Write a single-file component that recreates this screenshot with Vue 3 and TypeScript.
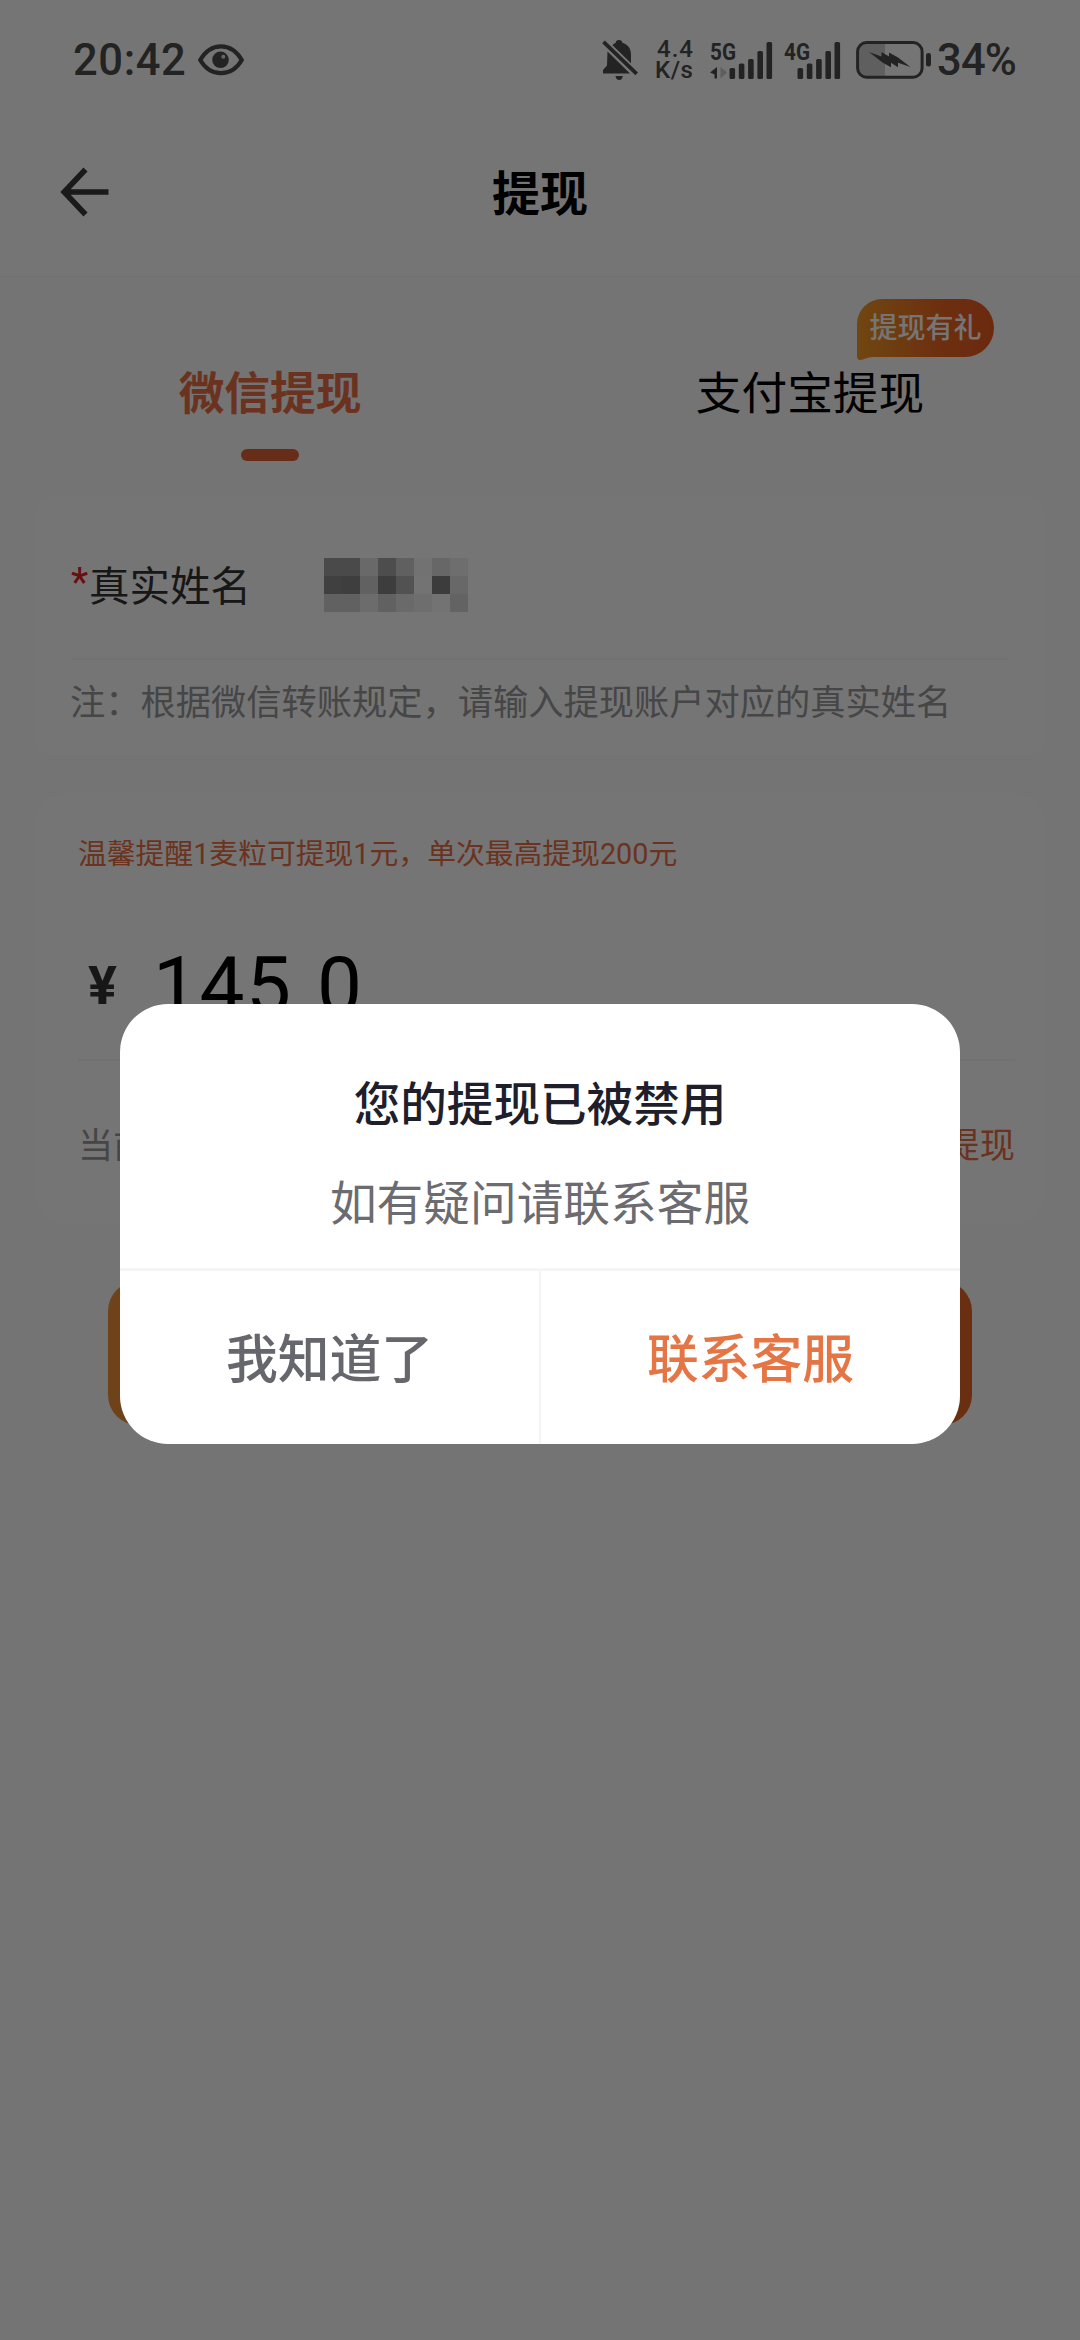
<script setup lang="ts">
interface SignalBar {
  x: number
  h: number
}

const signalBars: SignalBar[] = [
  { x: 0, h: 11 },
  { x: 9.3, h: 15.5 },
  { x: 18.6, h: 20 },
  { x: 27.9, h: 28 },
  { x: 37, h: 37 },
]

// Greyscale blocks that hide the account holder's name, 18px per cell
const mosaic: string[][] = [
  ['#a2a2a2', '#a2a2a2', '#e4e4e4', '#a8a8a8', '#d2d2d2', '#f8f8f8', '#e0e0e0', '#f0f0f0'],
  ['#8b8b8b', '#888888', '#d4d4d4', '#868686', '#b2b2b2', '#fbfbfb', '#848484', '#e2e2e2'],
  ['#d4d4d4', '#d4d4d4', '#ececec', '#d4d4d4', '#e8e8e8', '#efefef', '#fafafa', '#d8d8d8'],
]
</script>

<template>
  <div class="screen">
    <header class="status">
      <span class="clock">20:42</span>
      <svg class="eye" viewBox="0 0 46 32" width="46" height="32">
        <path d="M2.2 16C7.5 7 14.5 2.3 23 2.3S38.500 7 43.800 16C38.500 25 31.500 29.200 23 29.200S7.500 25 2.200 16Z" fill="none" stroke="#4d4d4d" stroke-width="4.200" />
        <circle cx="22.500" cy="15.800" r="8.300" fill="#4d4d4d" />
        <circle cx="25.300" cy="12.800" r="2" fill="#dedede" />
      </svg>
      <span class="grow"></span>
      <svg class="bell" viewBox="0 0 38 42" width="38" height="42">
        <g fill="#4d4d4d">
          <path d="M6.500 12.500 29 34.500H2V31L6 26.500Z" />
          <path d="M11.500 6.200C12.600 5 13.400 4.300 14.800 3.800 14.800 1.900 16 1 18 1s3.300 1 3.300 2.800C27 5.400 30 9.700 30 15.500V24.300Z" />
          <path d="M14.500 37H21.800C21.500 39.600 20.300 41 18.200 41S14.800 39.600 14.500 37Z" />
          <path d="M3.800 1.500 37 33.500 34.400 36.200 1.200 4.200Z" />
        </g>
      </svg>
      <span class="rate"><span class="num">4.4</span><span class="unit">K/s</span></span>
      <svg class="sig5" viewBox="0 -10 63 58" width="63" height="58">
        <text x="0" y="18.500" class="net" textLength="26" lengthAdjust="spacingAndGlyphs">5G</text>
        <path d="M0 31.500 7 26V37.500H4.500V33.500Z" fill="#4d4d4d" />
        <path d="M10.500 26 17 31.500 10.500 37.500Z" fill="#cacaca" />
        <rect v-for="b in signalBars" :key="b.x" :x="b.x + 19.500" :y="38 - b.h" width="5.600" :height="b.h" rx="1.600" fill="#4d4d4d" />
      </svg>
      <svg class="sig4" viewBox="0 -10 57 58" width="57" height="58">
        <text x="0" y="18.500" class="net" textLength="26" lengthAdjust="spacingAndGlyphs">4G</text>
        <rect v-for="b in signalBars" :key="b.x" :x="b.x + 13.500" :y="38 - b.h" width="5.600" :height="b.h" rx="1.600" fill="#4d4d4d" />
      </svg>
      <svg class="battery" viewBox="0 0 76 38" width="76" height="38">
        <path d="M10 3H29V35H10Q2 35 2 27V11Q2 3 10 3Z" fill="#d0d0d0" />
        <rect x="1.600" y="1.600" width="64.500" height="34.600" rx="9" fill="none" stroke="#4d4d4d" stroke-width="3" />
        <path d="M13 11 25.500 15.500V11L33 15.500V11.500L42 16.500 54.500 26 42 21.700V26.300L35 21.800V26.200L26.500 21.500Z" fill="#4d4d4d" />
        <rect x="70" y="12" width="5" height="13.500" rx="2.300" fill="#4d4d4d" />
      </svg>
      <span class="percent">34%</span>
    </header>

    <nav class="titlebar">
      <svg class="back" viewBox="0 0 50 50" width="50" height="50">
        <path d="M25.500 2.500 4.200 25 25.500 47.500M4.200 25H48.500" fill="none" stroke="#3a3a3a" stroke-width="5.600" />
      </svg>
      <h1>提现</h1>
      <span class="spacer"></span>
    </nav>

    <div class="tabs">
      <div class="tab active">
        <span>微信提现</span>
        <i class="line"></i>
      </div>
      <div class="tab">
        <span>支付宝提现</span>
        <div class="badge">
          <svg viewBox="0 0 137 62" width="137" height="62">
            <defs>
              <linearGradient id="gift" x1="0" x2="1">
                <stop offset="0" stop-color="#f39a28" />
                <stop offset="0.250" stop-color="#f08624" />
                <stop offset="0.650" stop-color="#ee6422" />
                <stop offset="1" stop-color="#ea5c20" />
              </linearGradient>
            </defs>
            <path d="M25 0H108A29 29 0 0 1 108 58H16C10 58 7 61 3 61Q0 61 0 57V25A25 25 0 0 1 25 0Z" fill="url(#gift)" />
          </svg>
          <em>提现有礼</em>
        </div>
      </div>
    </div>

    <section class="card name">
      <div class="field">
        <span class="star">*</span>
        <span class="label">真实姓名</span>
        <div class="mosaic">
          <template v-for="(row, r) in mosaic" :key="r">
            <i v-for="(c, i) in row" :key="i" :style="{ background: c }"></i>
          </template>
        </div>
      </div>
      <p class="note">注：根据微信转账规定，请输入提现账户对应的真实姓名</p>
    </section>

    <section class="card money">
      <p class="tip">温馨提醒1麦粒可提现1元，单次最高提现200元</p>
      <div class="amount"><b>¥</b><span>145<i>.</i>0</span></div>
      <div class="balance"><span>当前余额</span><a>全部提现</a></div>
    </section>

    <button class="submit">提现</button>

    <div class="mask">
      <div class="dialog">
        <h2>您的提现已被禁用</h2>
        <p>如有疑问请联系客服</p>
        <div class="actions">
          <button>我知道了</button>
          <button class="primary">联系客服</button>
        </div>
      </div>
    </div>
  </div>
</template>

<style>
body {
  margin: 0;
}
</style>

<style scoped>
* {
  box-sizing: border-box;
  margin: 0;
}
.screen {
  position: relative;
  display: flex;
  flex-direction: column;
  width: 1080px;
  height: 2340px;
  overflow: hidden;
  background: #fcfcfc;
  font-family: Roboto, "Noto Sans CJK SC", sans-serif;
  color: #000;
}
button {
  border: 0;
  padding: 0;
  background: none;
  font-family: inherit;
}
.status {
  display: flex;
  align-items: center;
  height: 120px;
  padding: 0 65px 0 73px;
  background: #fff;
  color: #4d4d4d;
}
.grow {
  flex: 1;
}
.clock {
  font-size: 43.500px;
  font-weight: 500;
  letter-spacing: 0.600px;
  width: 125px;
}
.percent {
  font-size: 43.500px;
  font-weight: 500;
  width: 78px;
  margin-left: 5px;
  letter-spacing: -0.800px;
  white-space: nowrap;
}
.rate {
  display: flex;
  flex-direction: column;
  width: 40px;
  margin-left: 16px;
  font-size: 24px;
  font-weight: 500;
  line-height: 21px;
}
.num {
  padding-left: 2px;
  letter-spacing: 1px;
}
.unit {
  letter-spacing: 0.500px;
}
.sig5 {
  margin-left: 15px;
}
.sig4 {
  margin-left: 11px;
}
.battery {
  margin-left: 15px;
}
.net {
  font-size: 24.500px;
  font-weight: 700;
  fill: #4d4d4d;
}
.titlebar {
  display: flex;
  align-items: center;
  justify-content: space-between;
  height: 158px;
  padding: 0 60px 12px;
  background: #fff;
  border-bottom: 2px solid #f8f8f8;
}
h1 {
  padding-top: 6px;
  font-size: 48px;
  line-height: 70px;
  font-weight: 700;
}
.spacer {
  width: 50px;
}
.tabs {
  display: flex;
  height: 219px;
}
.tab {
  position: relative;
  display: flex;
  flex-direction: column;
  align-items: center;
  width: 540px;
  padding-top: 82px;
  font-size: 45.700px;
  line-height: 70px;
}
.active {
  font-weight: 700;
  color: #e97045;
}
.line {
  width: 58px;
  height: 12px;
  margin-top: 19px;
  border-radius: 6px;
  background: #e06236;
}
.badge {
  position: absolute;
  left: 317px;
  top: 21px;
  width: 137px;
  height: 62px;
}
.badge svg {
  display: block;
}
.badge em {
  position: absolute;
  left: 12.500px;
  top: 1px;
  line-height: 57px;
  font-size: 28px;
  font-style: normal;
  font-weight: 500;
  color: #fff;
  white-space: nowrap;
}
.card {
  width: 1008px;
  margin-left: 36px;
  border-radius: 14px;
  background: #fff;
}
.name {
  height: 258px;
  padding: 0 36px;
}
.field {
  display: flex;
  align-items: center;
  height: 163px;
  padding-top: 14px;
  border-bottom: 2px solid #f6f6f6;
}
.star {
  width: 18px;
  padding-bottom: 4px;
  margin-left: -1px;
  font-size: 40px;
  line-height: 60px;
  color: #e02222;
}
.label {
  width: 235px;
  padding-top: 5px;
  font-size: 40.500px;
  line-height: 60px;
  color: #333;
}
.mosaic {
  display: grid;
  grid-template-columns: repeat(8, 18px);
  grid-auto-rows: 18px;
}
.note {
  margin-left: -2px;
  padding-top: 17px;
  font-size: 35.250px;
  line-height: 52px;
  color: #999;
  white-space: nowrap;
}
.money {
  height: 431px;
  margin-top: 38px;
  padding: 37px 29px 0 42px;
  border-radius: 30px;
}
.tip {
  font-size: 28.800px;
  line-height: 48px;
  color: #e97045;
  white-space: nowrap;
}
.amount {
  display: flex;
  align-items: center;
  height: 183px;
  padding-top: 34px;
  border-bottom: 2px solid #f6f6f6;
}
.amount b {
  width: 64px;
  padding-left: 10px;
  font-size: 54px;
  line-height: 60px;
  color: #333;
}
.amount span {
  padding-left: 11px;
  font-size: 80px;
  line-height: 100px;
  letter-spacing: 1.500px;
}
.amount i {
  font-style: normal;
  letter-spacing: 3.500px;
}
.balance {
  display: flex;
  justify-content: space-between;
  align-items: center;
  padding-top: 59px;
  font-size: 35.200px;
  line-height: 52px;
  color: #999;
}
.balance a {
  color: #e97045;
}
.submit {
  width: 864px;
  height: 144px;
  margin: 57px 0 0 108px;
  border-radius: 30px;
  background: linear-gradient(90deg, #f19239, #e66427);
  color: #fff;
  font-size: 48px;
}
.mask {
  position: absolute;
  inset: 0;
  display: flex;
  justify-content: center;
  align-items: flex-start;
  padding-top: 1004px;
  background: rgba(0, 0, 0, 0.540);
}
.dialog {
  display: flex;
  flex-direction: column;
  width: 840px;
  height: 440px;
  padding-top: 66px;
  border-radius: 48px;
  overflow: hidden;
  background: #fff;
  text-align: center;
}
h2 {
  font-size: 46.600px;
  line-height: 70px;
  font-weight: 500;
  color: #1f1f2b;
}
.dialog p {
  margin-top: 29px;
  font-size: 46.700px;
  line-height: 70px;
  color: #6b6b70;
}
.actions {
  display: flex;
  height: 176px;
  margin-top: 29px;
  border-top: 3px solid #f5f5f6;
}
.actions button {
  flex: 1;
  padding-bottom: 5px;
  font-size: 51.800px;
  font-weight: 500;
  color: #66666d;
}
.actions button + button {
  border-left: 2px solid #f5f5f6;
}
.actions .primary {
  color: #e57545;
}
</style>
